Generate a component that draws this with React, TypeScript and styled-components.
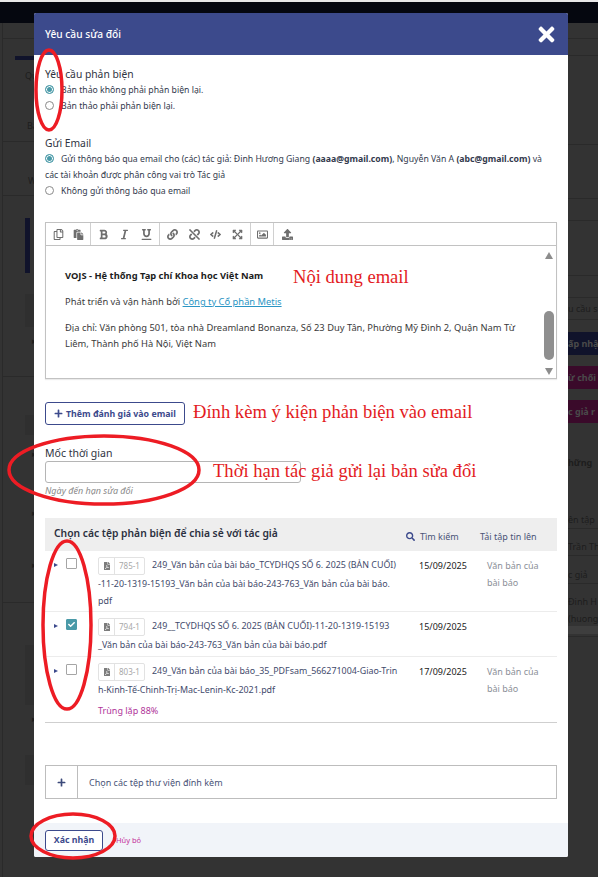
import React from "react";
import styled, { createGlobalStyle } from "styled-components";
import {
  FaBold,
  FaCheck,
  FaCode,
  FaExpandArrowsAlt,
  FaFilePdf,
  FaItalic,
  FaLink,
  FaPaste,
  FaPlus,
  FaRegCopy,
  FaRegImage,
  FaSearch,
  FaTimes,
  FaUnderline,
  FaUnlink,
  FaUpload,
} from "react-icons/fa";

const GlobalStyle = createGlobalStyle`
  html, body {
    margin: 0;
    padding: 0;
    height: 100%;
    overflow: hidden;
    background: #333333;
    font-family: "Noto Sans", "Liberation Sans", sans-serif;
  }
  * { box-sizing: border-box; }
`;

const Page = styled.div`
  position: relative;
  width: 598px;
  height: 877px;
  overflow: hidden;
  background: #333333;
  border-top: 2px solid #e8e8e8;
`;

const TopBar = styled.div`
  height: 21px;
  background: #05070f;
`;

const Behind = styled.div`
  display: flex;
  justify-content: space-between;
  height: 854px;
`;

const LeftRail = styled.div`
  width: 34px;
  margin-left: 2px;
  border-left: 1px solid #2a2a2a;
  overflow: hidden;
`;

const RightRail = styled.div`
  width: 30px;
  overflow: hidden;
`;

const RailRow = styled.div<{ $h: number; $line?: boolean; $indent?: number; $bold?: boolean }>`
  height: ${(p) => p.$h}px;
  display: flex;
  align-items: center;
  padding-left: ${(p) => p.$indent ?? 0}px;
  border-bottom: ${(p) => (p.$line ? "1px solid #2a2a2a" : "none")};
  color: #1d1d1d;
  font-size: 9px;
  font-weight: ${(p) => (p.$bold ? 700 : 400)};
  white-space: nowrap;
`;

const RailFill = styled.div<{ $bg: string; $w?: number }>`
  flex: ${(p) => (p.$w ? "none" : 1)};
  width: ${(p) => (p.$w ? `${p.$w}px` : "auto")};
  height: 100%;
  display: flex;
  align-items: center;
  background: ${(p) => p.$bg};
  color: #4a4a4a;
  font-weight: 700;
`;

const Modal = styled.div`
  position: absolute;
  left: 34px;
  top: 11px;
  width: 534px;
  height: 844px;
  display: flex;
  flex-direction: column;
  background: #ffffff;
  border-radius: 2px;
  overflow: hidden;
`;

const Header = styled.header`
  height: 42px;
  flex: none;
  display: flex;
  align-items: center;
  justify-content: space-between;
  padding: 0 10px 0 11px;
  background: #3c4a8c;
  color: #ffffff;
  font-size: 10.2px;
  font-weight: 500;
`;

const CloseMark = styled(FaTimes)`
  width: 23px;
  height: 23px;
  color: #ffffff;
`;

const Body = styled.div`
  flex: 1;
  padding: 12px 11px 0;
  color: #333a4d;
  font-size: 9px;
`;

const SectionTitle = styled.div`
  font-size: 10.3px;
  line-height: 15px;
  color: #30343f;
`;

const Group = styled.div<{ $gap?: number }>`
  margin-bottom: ${(p) => p.$gap ?? 0}px;
`;

const OptionRow = styled.div`
  font-size: 8.7px;
  line-height: 16px;
`;

const Radio = styled.span<{ $on?: boolean }>`
  display: inline-block;
  width: 9px;
  height: 9px;
  margin-right: 7px;
  vertical-align: -1px;
  border-radius: 50%;
  border: 1px solid ${(p) => (p.$on ? "#4a9aa8" : "#8a8a8a")};
  background: ${(p) => (p.$on ? "#4a9aa8" : "#ffffff")};
  box-shadow: ${(p) => (p.$on ? "inset 0 0 0 1px #ffffff" : "none")};
`;

const Editor = styled.div`
  height: 157px;
  display: flex;
  flex-direction: column;
  border: 1px solid #c2c2c2;
  box-shadow: 0 1px 1px rgba(0, 0, 0, 0.08);
`;

const Toolbar = styled.div`
  height: 23px;
  flex: none;
  display: flex;
  border-bottom: 1px solid #c2c2c2;
`;

const ToolGroup = styled.div<{ $w: number; $last?: boolean }>`
  width: ${(p) => p.$w}px;
  display: flex;
  align-items: center;
  justify-content: space-around;
  padding: 0 2px;
  border-right: ${(p) => (p.$last ? "none" : "1px solid #d0d0d0")};
  color: #6e6e6e;
  font-size: 11px;
`;

const EditorMain = styled.div`
  flex: 1;
  display: flex;
  min-height: 0;
`;

const EditorText = styled.div`
  flex: 1;
  padding: 22px 24px 0 19px;
  color: #3a3a3a;
  font-size: 9.35px;
  line-height: 16px;
`;

const MailLine = styled.p<{ $strong?: boolean }>`
  margin: 0 0 10px;
  font-weight: ${(p) => (p.$strong ? 700 : 400)};
  color: ${(p) => (p.$strong ? "#1c1c1c" : "#3a3a3a")};
`;

const MailLink = styled.a`
  color: #2a95c4;
  text-decoration: underline;
`;

const ScrollTrack = styled.div`
  width: 14px;
  flex: none;
  display: flex;
  flex-direction: column;
  align-items: center;
  padding: 6px 0 3px;
`;

const ScrollArrow = styled.span<{ $down?: boolean }>`
  width: 0;
  height: 0;
  border-left: 4.5px solid transparent;
  border-right: 4.5px solid transparent;
  border-bottom: ${(p) => (p.$down ? "none" : "7px solid #8c8c8c")};
  border-top: ${(p) => (p.$down ? "7px solid #8c8c8c" : "none")};
`;

const ScrollThumb = styled.div`
  width: 10px;
  height: 49px;
  margin: auto 0 8px;
  border-radius: 5px;
  background: #8f8f8f;
`;

const OutlineButton = styled.button`
  height: 23px;
  padding: 0 8px;
  display: inline-flex;
  align-items: center;
  gap: 3px;
  background: #ffffff;
  border: 1px solid #3c4a8c;
  border-radius: 3px;
  color: #3c4a8c;
  font-family: inherit;
  font-size: 8.8px;
  font-weight: 700;
`;

const AddReviewRow = styled.div`
  margin-top: 23px;
  height: 23px;
  display: flex;
`;

const FieldLabel = styled.div`
  margin-top: 20px;
  font-size: 10.5px;
  line-height: 16px;
  color: #30343f;
`;

const DateInput = styled.input`
  display: block;
  width: 256px;
  height: 22px;
  border: 1px solid #b5b5b5;
  border-radius: 3px;
  background: #ffffff;
`;

const Hint = styled.div`
  height: 16px;
  line-height: 16px;
  font-size: 9px;
  font-style: italic;
  color: #8a8a8a;
`;

const FileTable = styled.div`
  margin-top: 19px;
  width: 512px;
  border-bottom: 1px solid #cfcfcf;
`;

const TableHead = styled.div`
  height: 33px;
  display: flex;
  align-items: center;
  padding-left: 9px;
  background: #eeeeee;
`;

const TableTitle = styled.div`
  flex: 1;
  padding-bottom: 4px;
  font-size: 10.3px;
  font-weight: 600;
  color: #2b3040;
`;

const HeadAction = styled.div<{ $w: number }>`
  width: ${(p) => p.$w}px;
  display: flex;
  align-items: center;
  gap: 5px;
  padding-top: 3px;
  color: #4a5478;
`;

const FileRow = styled.div<{ $h: number }>`
  height: ${(p) => p.$h}px;
  display: grid;
  grid-template-columns: 53px 321px 68px 70px;
  padding-top: 6px;
  line-height: 16.5px;
  & + & {
    border-top: 1px solid #ececec;
  }
`;

const RowControls = styled.div`
  display: flex;
  align-items: flex-start;
  gap: 8px;
  padding: 1px 0 0 9px;
`;

const Caret = styled.span`
  width: 0;
  height: 0;
  margin-top: 5px;
  border-top: 2.5px solid transparent;
  border-bottom: 2.5px solid transparent;
  border-left: 4px solid #3c4a8c;
`;

const Checkbox = styled.span<{ $on?: boolean }>`
  width: 11px;
  height: 11px;
  display: flex;
  align-items: center;
  justify-content: center;
  border: 1px solid ${(p) => (p.$on ? "#4a9aa8" : "#a5a5a5")};
  border-radius: 1px;
  background: ${(p) => (p.$on ? "#4a9aa8" : "#ffffff")};
  color: #ffffff;
  font-size: 7px;
`;

const FileBadge = styled.span`
  display: inline-flex;
  align-items: stretch;
  height: 18px;
  margin-right: 7px;
  vertical-align: middle;
  border: 1px solid #e2e2e2;
  border-radius: 2px;
`;

const BadgeIcon = styled.span`
  width: 16px;
  display: flex;
  align-items: center;
  justify-content: center;
  border-right: 1px solid #e2e2e2;
  color: #7c7c7c;
  font-size: 8px;
`;

const BadgeNumber = styled.span`
  width: 29px;
  display: flex;
  align-items: center;
  justify-content: center;
  color: #a8a8a8;
  font-size: 8px;
`;

const FileName = styled.div`
  font-size: 8.9px;
  color: #3f4a6b;
  white-space: nowrap;
  &:first-child {
    margin-bottom: 1px;
  }
`;

const DupNote = styled.div`
  margin-top: 4px;
  color: #b0359a;
`;

const DateCell = styled.div`
  padding-top: 1px;
  color: #222222;
`;

const TypeCell = styled.div`
  padding-top: 1px;
  color: #8b8f98;
`;

const AttachBox = styled.div`
  margin-top: 42px;
  width: 512px;
  height: 34px;
  display: flex;
  border: 1px solid #bdbdbd;
`;

const AttachPlus = styled.div`
  width: 32px;
  display: flex;
  align-items: center;
  justify-content: center;
  border-right: 1px solid #bdbdbd;
  color: #3c4a7a;
  font-size: 9px;
`;

const AttachText = styled.div`
  display: flex;
  align-items: center;
  padding-left: 11px;
  color: #4a5478;
`;

const Footer = styled.footer`
  height: 34px;
  flex: none;
  display: flex;
  align-items: center;
  gap: 13px;
  padding: 0 11px;
  background: #f1f4f9;
`;

const ConfirmButton = styled(OutlineButton)`
  width: 58px;
  height: 21px;
  justify-content: center;
  padding: 0;
`;

const CancelLink = styled.span`
  color: #c4309a;
  font-size: 7.5px;
`;

const Scribbles = styled.svg`
  position: absolute;
  left: 0;
  top: -2px;
  width: 598px;
  height: 877px;
  pointer-events: none;
`;

const RedNote = styled.div<{ $x: number; $y: number }>`
  position: absolute;
  left: ${(p) => p.$x}px;
  top: ${(p) => p.$y}px;
  color: #e31b23;
  font-family: "Liberation Serif", "Times New Roman", serif;
  font-size: 18.6px;
  line-height: 22px;
  white-space: nowrap;
`;

const leftRows = [
  { h: 16, line: true },
  { h: 17 },
  { h: 4, indent: 12, fill: "#10132b" },
  { h: 30, text: "Qu", indent: 22 },
  { h: 19 },
  { h: 33, text: "Bà", indent: 24, line: true },
  { h: 24 },
  { h: 30, text: "W", indent: 25, line: true },
  { h: 22 },
  { h: 55, indent: 22, fill: "#10132b", fillW: 5 },
  { h: 21 },
  { h: 33, indent: 22, fill: "#2f2f2f" },
  { h: 8 },
  { h: 10, text: "▸", indent: 29 },
  { h: 27 },
  { h: 5, indent: 22, line: true },
  { h: 38 },
  { h: 20, indent: 22, fill: "#2f2f2f" },
  { h: 13 },
  { h: 10, text: "▸", indent: 29 },
  { h: 49 },
  { h: 10, text: "▸", indent: 29 },
  { h: 42 },
  { h: 10, text: "▸", indent: 29 },
  { h: 34, indent: 22, line: true },
  { h: 42 },
  { h: 60, indent: 22, fill: "#2f2f2f" },
  { h: 8 },
  { h: 10, text: "▸", indent: 29 },
  { h: 32 },
  { h: 30, indent: 22, fill: "#2f2f2f" },
];

const rightRows = [
  { h: 16, line: true },
  { h: 17, line: true },
  { h: 89, line: true },
  { h: 54, line: true },
  { h: 22, line: true },
  { h: 55, line: true },
  { h: 22, line: true },
  { h: 22, text: "u cầu s", line: true },
  { h: 12 },
  { h: 23, text: "ấp nhậ", bold: true, fill: "#10132b" },
  { h: 11 },
  { h: 23, text: "ừ chối", bold: true, fill: "#3a0a2a" },
  { h: 11 },
  { h: 23, text: "c giả r", bold: true, fill: "#3a0a2a" },
  { h: 29 },
  { h: 20, text: "hững", bold: true },
  { h: 39 },
  { h: 18, text: "ên tập", line: true },
  { h: 9 },
  { h: 18, text: "Trần Th", line: true },
  { h: 10 },
  { h: 18, text: "c giả", line: true },
  { h: 8 },
  { h: 18, text: "Đinh H" },
  { h: 16, text: "(huong" },
  { h: 8, fill: "#3e3e3e" },
  { h: 3, line: true },
];

type Row = {
  h: number;
  line?: boolean;
  indent?: number;
  text?: string;
  bold?: boolean;
  fill?: string;
  fillW?: number;
};

function Rail({ rows }: { rows: Row[] }) {
  return (
    <>
      {rows.map((r, i) => (
        <RailRow key={i} $h={r.h} $line={r.line} $indent={r.indent} $bold={r.bold}>
          {r.fill ? (
            <RailFill $bg={r.fill} $w={r.fillW}>
              {r.text}
            </RailFill>
          ) : (
            r.text
          )}
        </RailRow>
      ))}
    </>
  );
}

type FileItem = {
  id: string;
  lines: string[];
  date: string;
  kind?: string[];
  dup?: string;
  height: number;
  checked?: boolean;
};

const files: FileItem[] = [
  {
    id: "785-1",
    lines: [
      "249_Văn bản của bài báo_TCYDHQS SỐ 6. 2025 (BẢN CUỐI)",
      "-11-20-1319-15193_Văn bản của bài báo-243-763_Văn bản của bài báo.",
      "pdf",
    ],
    date: "15/09/2025",
    kind: ["Văn bản của", "bài báo"],
    height: 60,
  },
  {
    id: "794-1",
    lines: [
      "249__TCYDHQS SỐ 6. 2025 (BẢN CUỐI)-11-20-1319-15193",
      "_Văn bản của bài báo-243-763_Văn bản của bài báo.pdf",
    ],
    date: "15/09/2025",
    height: 45,
    checked: true,
  },
  {
    id: "803-1",
    lines: [
      "249_Văn bản của bài báo_35_PDFsam_566271004-Giao-Trin",
      "h-Kinh-Tế-Chinh-Trị-Mac-Lenin-Kc-2021.pdf",
    ],
    date: "17/09/2025",
    kind: ["Văn bản của", "bài báo"],
    dup: "Trùng lặp 88%",
    height: 66,
  },
];

function FileRowItem({ file }: { file: FileItem }) {
  return (
    <FileRow $h={file.height}>
      <RowControls>
        <Caret />
        <Checkbox $on={file.checked}>{file.checked && <FaCheck />}</Checkbox>
      </RowControls>
      <div>
        {file.lines.map((line, i) => (
          <FileName key={i}>
            {i === 0 && (
              <FileBadge>
                <BadgeIcon>
                  <FaFilePdf />
                </BadgeIcon>
                <BadgeNumber>{file.id}</BadgeNumber>
              </FileBadge>
            )}
            {line}
          </FileName>
        ))}
        {file.dup && <DupNote>{file.dup}</DupNote>}
      </div>
      <DateCell>{file.date}</DateCell>
      <TypeCell>
        {file.kind?.map((k) => (
          <div key={k}>{k}</div>
        ))}
      </TypeCell>
    </FileRow>
  );
}

export default function App() {
  return (
    <Page>
      <GlobalStyle />
      <TopBar />
      <Behind>
        <LeftRail>
          <Rail rows={leftRows} />
        </LeftRail>
        <RightRail>
          <Rail rows={rightRows} />
        </RightRail>
      </Behind>

      <Modal>
        <Header>
          <span>Yêu cầu sửa đổi</span>
          <CloseMark />
        </Header>
        <Body>
          <Group $gap={22}>
            <SectionTitle>Yêu cầu phản biện</SectionTitle>
            <OptionRow>
              <Radio $on />
              Bản thảo không phải phản biện lại.
            </OptionRow>
            <OptionRow>
              <Radio />
              Bản thảo phải phản biện lại.
            </OptionRow>
          </Group>
          <Group $gap={23}>
            <SectionTitle>Gửi Email</SectionTitle>
            <OptionRow>
              <Radio $on />
              Gửi thông báo qua email cho (các) tác giả: Đinh Hương Giang{" "}
              <b>(aaaa@gmail.com)</b>, Nguyễn Văn A <b>(abc@gmail.com)</b> và
              các tài khoản được phân công vai trò Tác giả
            </OptionRow>
            <OptionRow>
              <Radio />
              Không gửi thông báo qua email
            </OptionRow>
          </Group>

          <Editor>
            <Toolbar>
              <ToolGroup $w={45}>
                <FaRegCopy />
                <FaPaste />
              </ToolGroup>
              <ToolGroup $w={69}>
                <FaBold />
                <FaItalic />
                <FaUnderline />
              </ToolGroup>
              <ToolGroup $w={91}>
                <FaLink />
                <FaUnlink />
                <FaCode />
                <FaExpandArrowsAlt />
              </ToolGroup>
              <ToolGroup $w={23}>
                <FaRegImage />
              </ToolGroup>
              <ToolGroup $w={26} $last>
                <FaUpload />
              </ToolGroup>
            </Toolbar>
            <EditorMain>
              <EditorText>
                <MailLine $strong>VOJS - Hệ thống Tạp chí Khoa học Việt Nam</MailLine>
                <MailLine>
                  Phát triển và vận hành bởi <MailLink>Công ty Cổ phần Metis</MailLink>
                </MailLine>
                <MailLine>
                  Địa chỉ: Văn phòng 501, tòa nhà Dreamland Bonanza, Số 23 Duy Tân, Phường Mỹ Đình 2, Quận Nam Từ
                  Liêm, Thành phố Hà Nội, Việt Nam
                </MailLine>
              </EditorText>
              <ScrollTrack>
                <ScrollArrow />
                <ScrollThumb />
                <ScrollArrow $down />
              </ScrollTrack>
            </EditorMain>
          </Editor>

          <AddReviewRow>
            <OutlineButton>
              <FaPlus size={9} />
              Thêm đánh giá vào email
            </OutlineButton>
          </AddReviewRow>

          <FieldLabel>Mốc thời gian</FieldLabel>
          <DateInput />
          <Hint>Ngày đến hạn sửa đổi</Hint>

          <FileTable>
            <TableHead>
              <TableTitle>Chọn các tệp phản biện để chia sẻ với tác giả</TableTitle>
              <HeadAction $w={74}>
                <FaSearch size={9} color="#3c4a8c" />
                Tìm kiếm
              </HeadAction>
              <HeadAction $w={77}>Tải tập tin lên</HeadAction>
            </TableHead>
            {files.map((f) => (
              <FileRowItem key={f.id} file={f} />
            ))}
          </FileTable>

          <AttachBox>
            <AttachPlus>
              <FaPlus />
            </AttachPlus>
            <AttachText>Chọn các tệp thư viện đính kèm</AttachText>
          </AttachBox>
        </Body>
        <Footer>
          <ConfirmButton>Xác nhận</ConfirmButton>
          <CancelLink>Hủy bỏ</CancelLink>
        </Footer>
      </Modal>

      <RedNote $x={293} $y={264}>Nội dung email</RedNote>
      <RedNote $x={193} $y={399}>Đính kèm ý kiện phản biện vào email</RedNote>
      <RedNote $x={213} $y={458}>Thời hạn tác giả gửi lại bản sửa đổi</RedNote>

      <Scribbles viewBox="0 0 598 877">
        <g fill="none" stroke="#ed1c24" strokeWidth="3.5">
          <ellipse cx="49" cy="90" rx="13" ry="40" />
          <ellipse cx="104" cy="470" rx="95" ry="34" />
          <ellipse cx="67" cy="625" rx="24" ry="84" />
          <ellipse cx="73" cy="836" rx="42" ry="22" />
        </g>
      </Scribbles>
    </Page>
  );
}
